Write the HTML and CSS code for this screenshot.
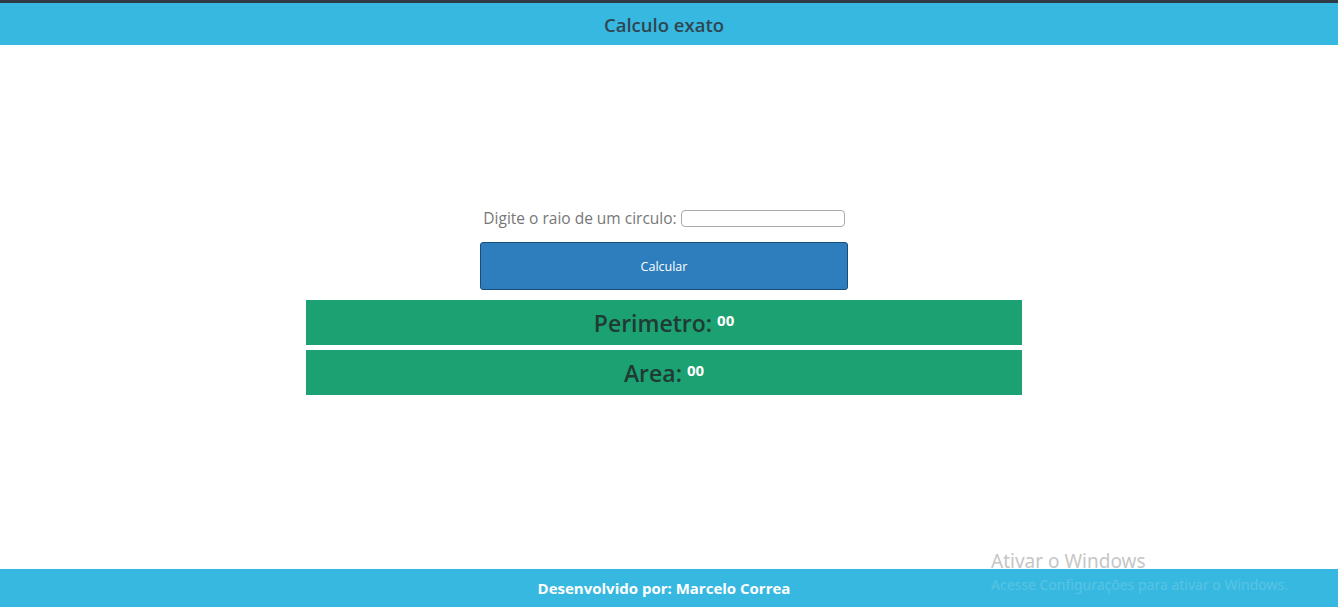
FILE: index.html
```html
<!DOCTYPE html>
<html lang="pt-BR">
<head>
<meta charset="utf-8">
<title>Calculo exato</title>
<link rel="stylesheet" href="styles.css">
</head>
<body>
<div class="page">
  <header class="topbar"><h1 class="title">Calculo exato</h1></header>
  <main class="main">
    <form class="calc">
      <label class="field">Digite o raio de um circulo: <input class="input" type="text"></label>
      <button class="btn" type="button">Calcular</button>
    </form>
    <div class="result"><span class="rlabel">Perimetro:</span> <span class="rvalue">00</span></div>
    <div class="result"><span class="rlabel">Area:</span> <span class="rvalue">00</span></div>
  </main>
  <footer class="footer">Desenvolvido por: Marcelo Correa</footer>
</div>
<div class="winmark">
  <div class="wm1">Ativar o Windows</div>
  <div class="wm2">Acesse Configurações para ativar o Windows.</div>
</div>
</body>
</html>
```
FILE: styles.css
```css
html, body { margin: 0; padding: 0; }
body {
  font-family: "Open Sans", "Liberation Sans", sans-serif;
  background: #fff;
  width: 1338px;
  height: 607px;
  overflow: hidden;
  position: relative;
}
.page { display: flex; flex-direction: column; height: 607px; width: 1328px; }
.topbar {
  border-top: 3px solid #2f3b42;
  background: #37b8e0;
  height: 42px;
  margin-right: -10px;
  padding-right: 10px;
  display: flex; align-items: center; justify-content: center;
}
.title {
  margin: 0; font-size: 18.5px; font-weight: 600; color: #2f4652;
}
.main {
  flex: 1;
  display: flex; flex-direction: column; align-items: center;
  padding-top: 164px;
}
.calc { display: flex; flex-direction: column; align-items: center; }
.field {
  font-size: 15.5px; color: #777; display: flex; align-items: center; gap: 4px;
  height: 18px;
}
.input {
  width: 162px; height: 15px; border: 1px solid #aaa; border-radius: 4px;
  padding: 0; margin: 0;
}
.btn {
  margin-top: 15px;
  width: 368px; height: 48px;
  background: #2e7dbd; color: #fff;
  border: 1px solid #1b4d7a; border-radius: 3px;
  font-family: inherit; font-size: 12.5px;
}
.result {
  margin-top: 10px;
  width: 716px; height: 45px;
  background: #1ca172;
  display: flex; justify-content: center; align-items: flex-start;
  gap: 5px;
  box-sizing: border-box; padding-top: 6px;
}
.result + .result { margin-top: 5px; }
.rlabel { font-size: 23px; font-weight: 600; color: #1f3b33; line-height: 34px; }
.rvalue { font-size: 15px; font-weight: 700; color: #fff; line-height: 22px; padding-top: 3px; }
.footer {
  height: 38px; background: #37b8e0;
  margin-right: -10px;
  padding-right: 10px;
  display: flex; align-items: center; justify-content: center;
  color: #fff; font-weight: 700; font-size: 15px;
}
.winmark {
  position: absolute; left: 991px; top: 549px;
  font-family: "Noto Sans", "Open Sans", sans-serif;
  pointer-events: none;
}
.wm1 { font-size: 19px; color: #c6c6c6; line-height: 24px; }
.wm2 { font-size: 14px; color: rgba(255,255,255,0.18); line-height: 24px; }
```
